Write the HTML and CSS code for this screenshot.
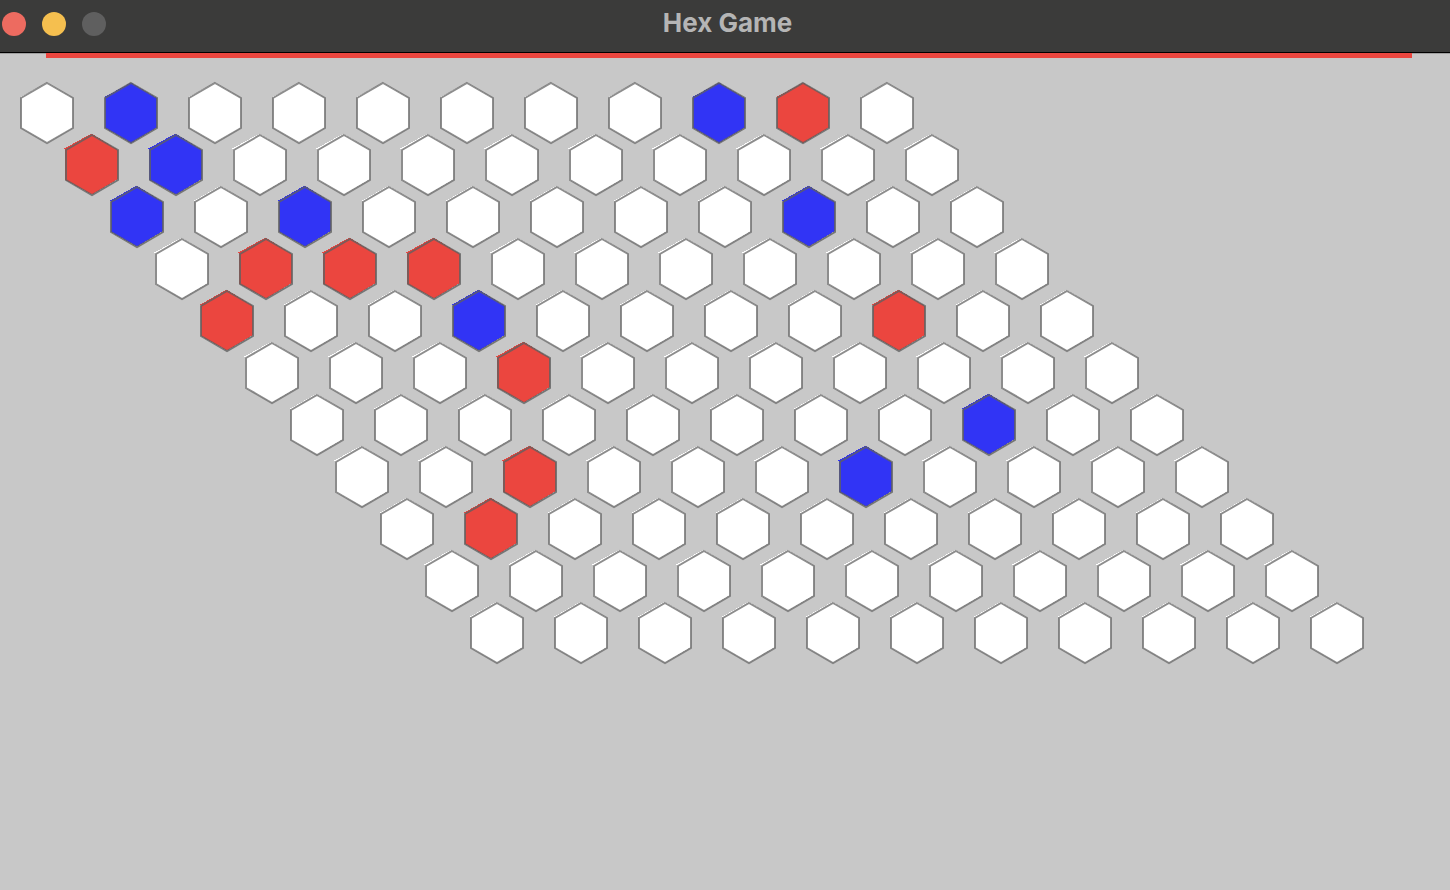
FILE: index.html
```html
<!DOCTYPE html>
<html lang="en">
<head>
  <meta charset="utf-8">
  <title>Hex Game</title>
  <link rel="stylesheet" href="styles.css">
</head>
<body>
  <header class="titlebar">
    <div class="window-controls">
      <button class="control control-close" type="button" aria-label="Close"></button>
      <button class="control control-minimize" type="button" aria-label="Minimize"></button>
      <button class="control control-zoom" type="button" aria-label="Zoom" disabled></button>
    </div>
    <h1 class="title">Hex Game</h1>
  </header>
  <main class="game">
    <div class="edge"></div>
    <div class="board" id="board"></div>
  </main>
  <script src="board.js"></script>
</body>
</html>
```
FILE: styles.css
```css
* {
  box-sizing: border-box;
}

body {
  margin: 0;
  min-height: 100vh;
  display: flex;
  flex-direction: column;
  overflow-x: hidden;
  background: #c8c8c8;
  font-family: Inter, "Liberation Sans", sans-serif;
}

.titlebar {
  display: grid;
  grid-template-columns: 1fr auto 1fr;
  align-items: center;
  padding: 8px 0 12px 2px;
  border-bottom: 1px solid #000;
  background: #3b3b3a;
}

.window-controls {
  display: flex;
  gap: 16px;
}

.control {
  width: 24px;
  height: 24px;
  padding: 0;
  border: 0;
  border-radius: 50%;
}

.control-close {
  background: #ed6b60;
}

.control-minimize {
  background: #f5bf4f;
}

.control-zoom {
  background: #5f5f5f;
}

.title {
  margin: 0;
  padding: 0 0 2px 3px;
  color: #b5b5b5;
  font-size: 26px;
  font-weight: 700;
  line-height: 30px;
}

.game {
  flex: 1;
  border-top: 1px solid #a0a0a0;
}

.edge {
  height: 5px;
  margin: -1px 38px 0 46px;
  background: #eb463f;
}

.board {
  padding: 24px 20px;
}

.row {
  display: flex;
  gap: 30px;
  height: 52px;
  padding-left: calc(var(--row) * 45px);
}

.cell {
  flex: none;
  width: 54px;
  height: 62px;
  padding: 0;
  border: 0;
  background: none;
}

.hex {
  display: block;
  overflow: visible;
}

.hex-fill {
  fill: #fff;
  shape-rendering: crispEdges;
}

.hex-line {
  fill: none;
  stroke: #707070;
  stroke-opacity: 0.8;
  stroke-width: 2;
}

.cell-red .hex-fill {
  fill: #eb463f;
}

.cell-blue .hex-fill {
  fill: #3134f5;
}

.cell-red .hex-line,
.cell-blue .hex-line {
  stroke: #606060;
  stroke-opacity: 0.8;
}
```
FILE: board.js
```js
// One character per cell: "." empty, "R" red, "B" blue.
const rows = [
  ".B......BR.",
  "RB.........",
  "B.B.....B..",
  ".RRR.......",
  "R..B....R..",
  "...R.......",
  "........B..",
  "..R...B....",
  ".R.........",
  "...........",
  "..........."
];
const kinds = { ".": "empty", R: "red", B: "blue" };
const outline = "27,1 53,16 53,46 27,61 1,46 1,16";

// The fill spills a little past the upper left side of the outline.
const fills = {
  first: "27,0.5 53,16 53,45.5 27,61 1,46 0.5,15",
  even: "26.5,-0.5 53,16 53,45 27,60.5 1,46 0.5,14.5",
  odd: "26.5,-0.5 53,16 53,45 27,60.5 -0.5,45.5 -0.5,14.5"
};

document.getElementById("board").innerHTML = rows.map((row, y) => {
  const fill = y === 0 ? fills.first : y % 2 ? fills.odd : fills.even;
  const cells = [...row].map((mark, x) => `
    <button type="button" class="cell cell-${kinds[mark]}" aria-label="Row ${y + 1}, column ${x + 1}, ${kinds[mark]}">
      <svg class="hex" width="54" height="62" viewBox="0 0 54 62" aria-hidden="true">
        <polygon class="hex-fill" points="${fill}"/>
        <polygon class="hex-line" points="${outline}"/>
      </svg>
    </button>`).join("");
  return `<div class="row" style="--row: ${y}">${cells}</div>`;
}).join("");
```
